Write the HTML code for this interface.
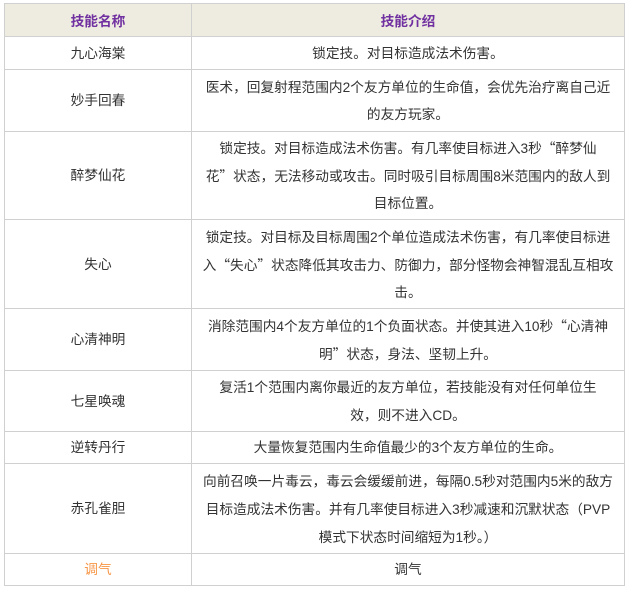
<!DOCTYPE html>
<html><head><meta charset="utf-8"><style>
body{margin:0;background:#fff;}
table{position:absolute;left:4px;top:3px;border-collapse:collapse;width:620px;table-layout:fixed;font-family:"Liberation Sans","Noto Sans CJK SC",sans-serif;font-size:13.7px;color:#333;}
td{border:1px solid #d0d0d0;text-align:center;vertical-align:middle;line-height:27px;padding:0 2px;white-space:nowrap;}
th{border:1px solid #d0d0d0;background:#eeebe1;color:#7030a0;font-weight:bold;height:32px;padding:0;}
.c{font-family:"Noto Sans CJK SC",sans-serif;}
</style></head><body>
<table>
<col style="width:187px"><col style="width:433px">
<tr><th>技能名称</th><th>技能介绍</th></tr>
<tr style="height:33px"><td>九心海棠</td><td>锁定技。对目标造成法术伤害。</td></tr>
<tr style="height:62px"><td>妙手回春</td><td>医术<span class="c">，</span>回复射程范围内2个友方单位的生命值<span class="c">，</span>会优先治疗离自己近<br>的友方玩家。</td></tr>
<tr style="height:88px"><td>醉梦仙花</td><td>锁定技。对目标造成法术伤害。有几率使目标进入3秒<span class="c">“</span>醉梦仙<br>花<span class="c">”</span>状态<span class="c">，</span>无法移动或攻击。同时吸引目标周围8米范围内的敌人到<br>目标位置。</td></tr>
<tr style="height:89px"><td>失心</td><td>锁定技。对目标及目标周围2个单位造成法术伤害<span class="c">，</span>有几率使目标进<br>入<span class="c">“</span>失心<span class="c">”</span>状态降低其攻击力、防御力<span class="c">，</span>部分怪物会神智混乱互相攻<br>击。</td></tr>
<tr style="height:62px"><td>心清神明</td><td>消除范围内4个友方单位的1个负面状态。并使其进入10秒<span class="c">“</span>心清神<br>明<span class="c">”</span>状态<span class="c">，</span>身法、坚韧上升。</td></tr>
<tr style="height:61px"><td>七星唤魂</td><td>复活1个范围内离你最近的友方单位<span class="c">，</span>若技能没有对任何单位生<br>效<span class="c">，</span>则不进入CD。</td></tr>
<tr style="height:32px"><td>逆转丹行</td><td>大量恢复范围内生命值最少的3个友方单位的生命。</td></tr>
<tr style="height:90px"><td>赤孔雀胆</td><td>向前召唤一片毒云<span class="c">，</span>毒云会缓缓前进<span class="c">，</span>每隔0.5秒对范围内5米的敌方<br>目标造成法术伤害。并有几率使目标进入3秒减速和沉默状态<span class="c">（</span>PVP<br>模式下状态时间缩短为1秒。<span class="c">）</span></td></tr>
<tr style="height:32px"><td style="color:#f79646">调气</td><td>调气</td></tr>
</table>
</body></html>
